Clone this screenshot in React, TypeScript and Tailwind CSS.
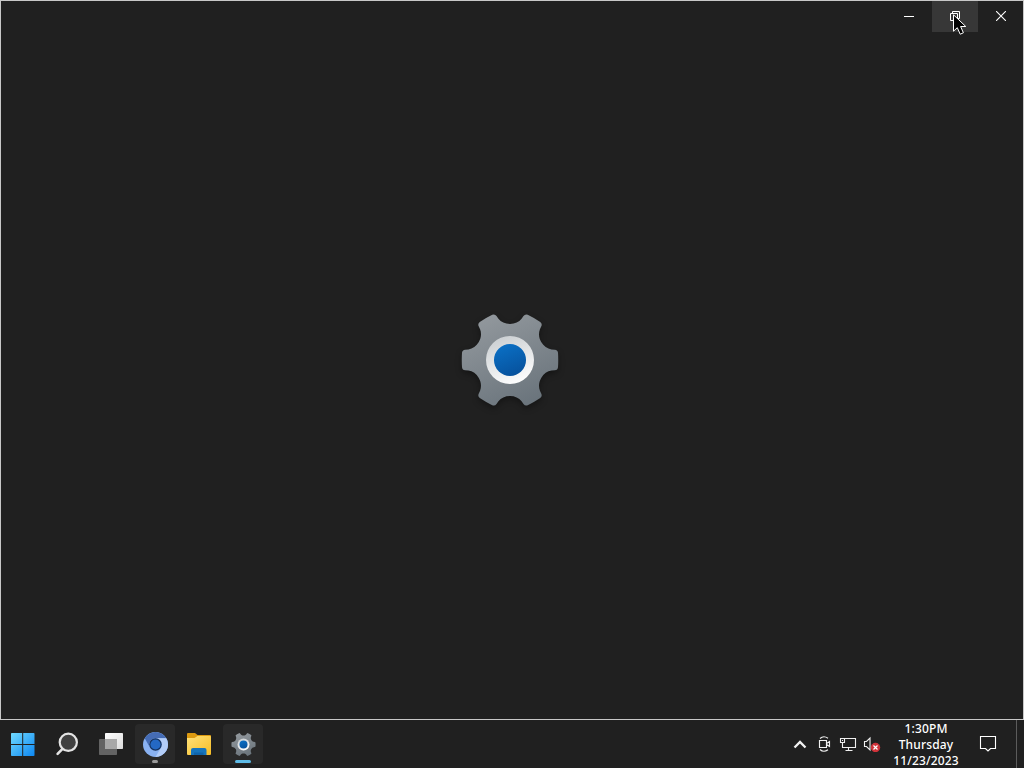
import type { ReactNode } from 'react';

// One tooth of the gear, pointing right, from notch centre to notch centre.
const TOOTH: [string, number[]][] = [
  ['C', [33.6, -13.8, 37.4, -11.2, 41.5, -10.6]],
  ['L', [44.8, -10.3]],
  ['Q', [47.7, -10, 48, -7.2]],
  ['Q', [48.5, 0, 48, 7.2]],
  ['Q', [47.7, 10, 44.8, 10.3]],
  ['L', [41.5, 10.6]],
  ['C', [37.4, 11.2, 33.6, 13.8, 31.2, 18]],
];

function gearPath() {
  let d = 'M31.2 -18';
  for (let i = 0; i < 6; i++) {
    const a = (i * Math.PI) / 3;
    for (const [cmd, pts] of TOOTH) {
      d += cmd;
      for (let j = 0; j < pts.length; j += 2) {
        const x = pts[j] * Math.cos(a) - pts[j + 1] * Math.sin(a);
        const y = pts[j] * Math.sin(a) + pts[j + 1] * Math.cos(a);
        d += `${x.toFixed(2)} ${y.toFixed(2)} `;
      }
    }
  }
  return d + 'Z';
}

const GEAR = gearPath();

function GearIcon({ id, className }: { id: string; className: string }) {
  return (
    <svg viewBox="-50 -50 100 100" className={className}>
      <defs>
        <linearGradient id={`${id}-body`} x1="0.25" y1="0" x2="0.75" y2="1">
          <stop offset="0" stopColor="#92989d" />
          <stop offset="1" stopColor="#69737b" />
        </linearGradient>
        <linearGradient id={`${id}-ring`} x1="0.3" y1="0" x2="0.7" y2="1">
          <stop offset="0" stopColor="#cbcfd2" />
          <stop offset="1" stopColor="#ffffff" />
        </linearGradient>
        <linearGradient id={`${id}-hub`} x1="0.3" y1="0" x2="0.7" y2="1">
          <stop offset="0" stopColor="#0a6fc4" />
          <stop offset="1" stopColor="#07519c" />
        </linearGradient>
      </defs>
      <path d={GEAR} fill={`url(#${id}-body)`} />
      <circle r="24" fill={`url(#${id}-ring)`} />
      <circle r="16" fill={`url(#${id}-hub)`} />
    </svg>
  );
}

function StartIcon() {
  return (
    <svg viewBox="0 0 24 24" className="mr-px h-6 w-6">
      <defs>
        <linearGradient id="start" gradientUnits="userSpaceOnUse" x1="0" y1="0" x2="24" y2="24">
          <stop offset="0" stopColor="#72dcff" />
          <stop offset="1" stopColor="#0c86f2" />
        </linearGradient>
      </defs>
      <path d="M0 1.8Q0 1 .8 1H11.2V12H0ZM12.2 1H22.7Q23.5 1 23.5 1.8V12H12.2ZM0 13H11.2V24H.8Q0 24 0 23.2ZM12.2 13H23.5V23.2Q23.5 24 22.7 24H12.2Z" fill="url(#start)" />
    </svg>
  );
}

function SearchIcon() {
  return (
    <svg viewBox="0 0 24 24" className="h-6 w-6" fill="none">
      <path d="M8.2 16.2 2.6 21.8" stroke="#e4e4e4" strokeWidth="2.6" strokeLinecap="round" />
      <circle cx="13.3" cy="10.3" r="8.6" fill="#414141" stroke="#e4e4e4" strokeWidth="2.2" />
    </svg>
  );
}

function TaskViewIcon() {
  return (
    <svg viewBox="0 0 24 24" className="h-6 w-6">
      <defs>
        <linearGradient id="task" x1="0" y1="0" x2="1" y2="1">
          <stop offset="0" stopColor="#ffffff" />
          <stop offset="1" stopColor="#dcdcdc" />
        </linearGradient>
      </defs>
      <rect x="6" y="1" width="18" height="16" rx="0.8" fill="url(#task)" />
      <rect x="0" y="7" width="18" height="16" rx="0.8" fill="#636363" />
      <path d="M6 7H18V17H6Z" fill="#a8a8a8" />
    </svg>
  );
}

function ChromiumIcon() {
  return (
    <svg viewBox="-12 -12 24 24" className="h-[25px] w-[25px]">
      <circle r="12" fill="#8ab2f2" />
      <path d="M-10.39 -6A12 12 0 0 1 10.39 -6H0A6 6 0 0 0 -5.2 3Z" fill="#456cb5" />
      <path d="M10.39 -6A12 12 0 0 1 0 12L5.2 3A6 6 0 0 0 0 -6Z" fill="#b3cdf8" />
      <circle r="6" fill="#14305c" />
      <circle r="4.9" fill="#2468c4" />
    </svg>
  );
}

function FolderIcon() {
  return (
    <svg viewBox="0 0 26 24" className="h-6 w-[26px]">
      <defs>
        <linearGradient id="folder" x1="0" y1="0" x2="1" y2="1">
          <stop offset="0" stopColor="#ffe17a" />
          <stop offset="1" stopColor="#f6bd25" />
        </linearGradient>
      </defs>
      <path d="M1 2Q1 1 2 1H9L11.5 3H24Q25 3 25 4V12H1Z" fill="#dd9a10" />
      <path d="M1 6H8.5L11.5 4H24Q25 4 25 5V22Q25 23 24 23H2Q1 23 1 22Z" fill="url(#folder)" />
      <path d="M5 23V18Q5 16 7 16H18.5Q20.5 16 20.5 18V23Z" fill="#1675bd" />
      <path d="M8 20.5H17.5V23H8Z" fill="#0f64aa" />
    </svg>
  );
}

function TaskButton({ label, active, indicator, children }: { label: string; active?: boolean; indicator?: string; children: ReactNode }) {
  return (
    <button
      aria-label={label}
      className={`relative flex h-10 w-10 items-center justify-center rounded ${active ? 'bg-[#292929]' : ''}`}
    >
      {children}
      {indicator && <span className={`absolute bottom-px left-1/2 h-[3px] -translate-x-1/2 rounded-full ${indicator}`} />}
    </button>
  );
}

function Tray() {
  return (
    <div className="flex items-center">
      <svg viewBox="0 0 14 10" className="h-2.5 w-3.5" fill="none">
        <path d="M1.5 8.5 7 3 12.5 8.5" stroke="#f2f2f2" strokeWidth="2.3" />
      </svg>
      <svg viewBox="0 0 13 16" className="ml-[11px] h-4 w-[13px]" fill="none" stroke="#f0f0f0">
        <path d="M1.5 4.5H8.5V11.5H1.5ZM8.5 7.5 11.5 5.5V10.5L8.5 8.5M2 2.5Q5.5-.8 10 2.2M2 13.5Q5.5 16.8 10 13.8" strokeWidth="1.15" />
      </svg>
      <svg viewBox="0 0 18 16" className="ml-2 h-4 w-[18px]" fill="none" stroke="#f0f0f0">
        <path d="M1.5 2.5H5.5V6.5H1.5ZM3.5 6.5V11.5H16.5V2.5H5.5M6.5 14.5H13.5M9.5 11.5V14.5" strokeWidth="1.1" />
        <path d="M3 4H4V5H3Z" fill="#f0f0f0" stroke="none" />
      </svg>
      <svg viewBox="0 0 18 16" className="ml-1.5 h-4 w-[18px]" fill="none">
        <path d="M1.5 5.5H3.5L7 2V14L3.5 10.5H1.5Z" stroke="#f0f0f0" strokeWidth="1.1" />
        <circle cx="12.5" cy="11.5" r="4.7" fill="#cf3239" />
        <path d="M10.5 9.5 14.5 13.5M14.5 9.5 10.5 13.5" stroke="#ffffff" strokeWidth="1.2" />
      </svg>
    </div>
  );
}

function WindowControls() {
  return (
    <div className="flex h-[31px] justify-end">
      <button aria-label="Minimize" className="flex w-[46px] items-center justify-center pb-px">
        <svg viewBox="0 0 10 10" className="h-2.5 w-2.5" stroke="#ffffff">
          <path d="M0 5.5H10" />
        </svg>
      </button>
      <button aria-label="Restore" className="flex w-[46px] items-center justify-center bg-[#373737] pb-px">
        <svg viewBox="0 0 10 10" className="h-2.5 w-2.5" fill="none" stroke="#ffffff">
          <path d="M.5 2.5H7.5V9.5H.5ZM2.5 2.5V.5H9.5V7.5H7.5" />
        </svg>
      </button>
      <button aria-label="Close" className="flex w-[45px] items-center justify-center pb-px">
        <svg viewBox="0 0 10 10" className="h-2.5 w-2.5" stroke="#ffffff">
          <path d="M0 0 10 10M10 0 0 10" strokeWidth="1.1" />
        </svg>
      </button>
    </div>
  );
}

export default function App() {
  return (
    <div className="relative flex h-[768px] w-[1024px] flex-col overflow-hidden bg-[#202020] font-['Noto_Sans',sans-serif]">
      {/* Settings window, still on its splash screen */}
      <main className="flex h-[720px] flex-col border border-[#c8c8c8] bg-[#202020]">
        <WindowControls />
        <div className="flex flex-1 items-center justify-center pr-1 pb-[31px]">
          <GearIcon id="splash" className="h-[100px] w-[100px] drop-shadow-[0_3px_3px_rgba(0,0,0,0.35)]" />
        </div>
      </main>

      {/* Taskbar */}
      <footer className="flex h-12 items-center justify-between bg-[#202020]">
        <div className="flex items-center gap-1 pl-[3px]">
          <TaskButton label="Start"><StartIcon /></TaskButton>
          <TaskButton label="Search"><SearchIcon /></TaskButton>
          <TaskButton label="Task view"><TaskViewIcon /></TaskButton>
          <TaskButton label="Chromium" active indicator="w-1.5 bg-[#9b9b9b]"><ChromiumIcon /></TaskButton>
          <TaskButton label="File Explorer"><FolderIcon /></TaskButton>
          <TaskButton label="Settings" active indicator="w-4 bg-[#5fbce8]">
            <GearIcon id="taskbar" className="h-[25px] w-[25px]" />
          </TaskButton>
        </div>
        <div className="flex h-full items-center">
          <Tray />
          <div className="ml-[11px] w-[68px] pt-0.5 text-center text-[12px] leading-4 font-medium tracking-[0.15px] whitespace-nowrap text-white">
            <div>1:30PM</div>
            <div>Thursday</div>
            <div>11/23/2023</div>
          </div>
          <svg viewBox="0 0 18 18" className="ml-[19px] h-[18px] w-[18px]" fill="none" stroke="#ffffff">
            <path d="M1.5 1.5H16.5V13.5H11.5L9 16 6.5 13.5H1.5Z" strokeWidth="1.1" />
          </svg>
          <div className="ml-[19px] h-full w-2 border-l border-[#5c5c5c]" />
        </div>
      </footer>

      {/* Mouse pointer */}
      <svg viewBox="0 0 14 21" className="absolute top-[14px] left-[953px] h-[21px] w-3.5">
        <path d="M.5.8V17.2L4.3 13.7 7.2 20.2 10.4 18.8 7.6 12.5H12.8Z" fill="#000000" stroke="#ffffff" />
      </svg>
    </div>
  );
}
